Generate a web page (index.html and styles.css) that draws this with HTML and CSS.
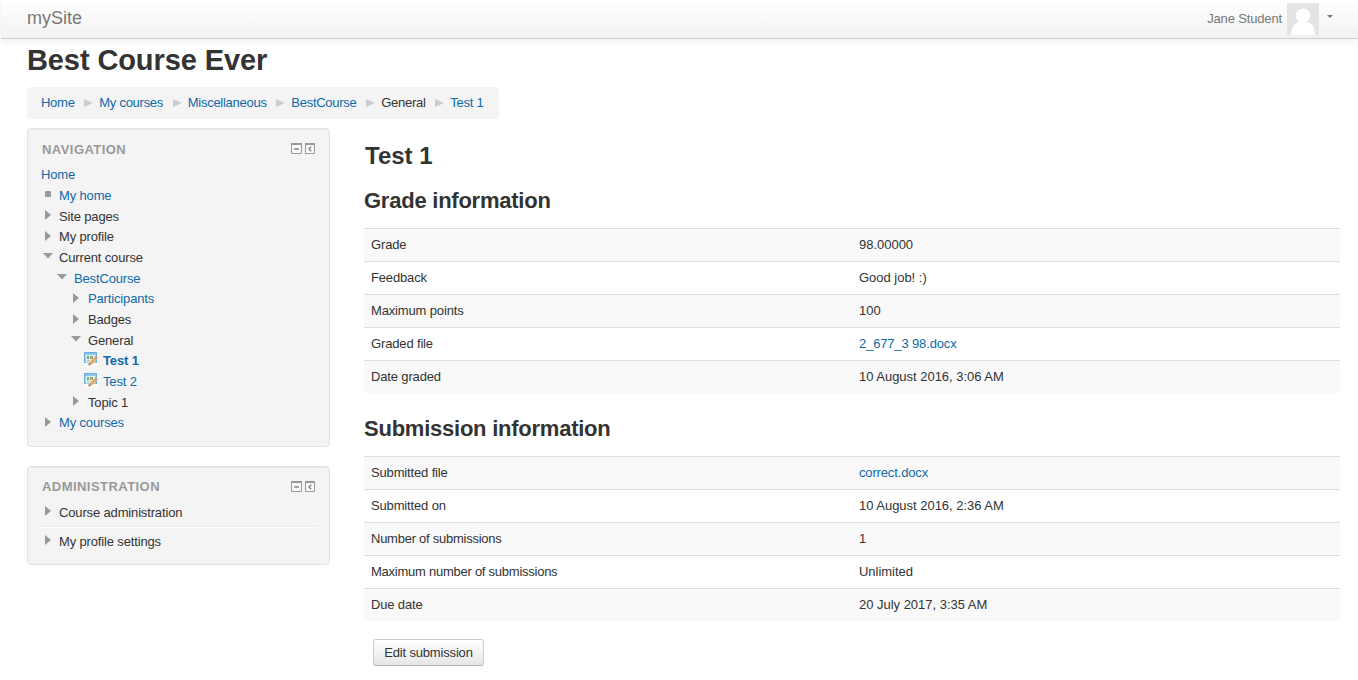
FILE: index.html
```html
<!DOCTYPE html>
<html lang="en">
<head>
<meta charset="utf-8">
<title>Best Course Ever: Test 1</title>
<link rel="stylesheet" href="styles.css">
</head>
<body>
<svg class="defs" width="0" height="0">
  <symbol id="right" viewBox="0 0 6 10"><path d="M0 0L6 5L0 10Z" fill="#999"/></symbol>
  <symbol id="down" viewBox="0 0 10 6"><path d="M0 0H10L5 5.5Z" fill="#999"/></symbol>
  <symbol id="assign" viewBox="0 0 14 15">
    <rect width="14" height="15" fill="#fafafa"/>
    <path d="M0 0H13V11H9L8 12H5L4 11H0Z" fill="#6baed6"/>
    <rect x="1" y="1" width="11" height="2" fill="#8ec5e6"/>
    <rect x="1.5" y="3" width="10" height="7.500" fill="#e6f1f5"/>
    <rect x="3" y="4" width="2" height="3" fill="#7fa65f"/><rect x="6" y="4" width="3" height="3" fill="#86ad86"/>
    <rect x="3" y="8" width="3" height="1" fill="#a9bfa6"/>
    <path d="M4.500 13.500L5.500 10.500L11.500 4.500L13.500 6.500L7.500 12.500Z" fill="#eba55b"/>
    <path d="M10.800 5.200L12 4L14 6L12.800 7.200Z" fill="#d99a9a"/>
    <path d="M4.500 13.500L5.200 11.500L6.500 12.800Z" fill="#77604a"/>
  </symbol>
  <symbol id="block" viewBox="0 0 24 11">
    <path d="M.5.5H10.500V10.500H.5Z M14.500 .5H23.500V10.500H14.500Z" fill="#f8f8f8" stroke="#999"/>
    <path d="M0 1H11M14 1H24" stroke="#999" stroke-width="2"/>
    <path d="M3 6H8" stroke="#888" stroke-width="1.500"/>
    <path d="M20.200 3.800L18 6L20.200 8.200" fill="none" stroke="#888" stroke-width="1.400"/>
  </symbol>
</svg>
<header class="topbar">
  <a class="brand">mySite</a>
  <div class="user">
    <span class="user-name">Jane Student</span>
    <svg class="avatar" viewBox="0 0 32 32"><rect width="32" height="32" fill="#e4e4e4"/><circle cx="16" cy="12.700" r="7.300" fill="#fff"/><path d="M4 32C4 24 9 19 12 19H20C24 19 28 24 28 32Z" fill="#fff"/></svg>
    <span class="caret"></span>
  </div>
</header>
<div class="page">
  <h1>Best Course Ever</h1>
  <nav class="crumbs">
    <a>Home</a><i></i><a>My courses</a><i></i><a>Miscellaneous</a><i></i><a>BestCourse</a><i></i><span>General</span><i></i><a>Test 1</a>
  </nav>
  <div class="columns">
    <aside class="side">
      <section class="block nav">
        <header class="block-head"><h2>NAVIGATION</h2><svg class="block-icons"><use href="#block"/></svg></header>
        <ul class="tree">
          <li class="root"><a>Home</a></li>
          <li class="l1"><b class="bullet"></b><a>My home</a></li>
          <li class="l1"><svg class="right"><use href="#right"/></svg><span>Site pages</span></li>
          <li class="l1"><svg class="right"><use href="#right"/></svg><span>My profile</span></li>
          <li class="l1"><svg class="down"><use href="#down"/></svg><span>Current course</span></li>
          <li class="l2"><svg class="down"><use href="#down"/></svg><a>BestCourse</a></li>
          <li class="l3"><svg class="right"><use href="#right"/></svg><a>Participants</a></li>
          <li class="l3"><svg class="right"><use href="#right"/></svg><span>Badges</span></li>
          <li class="l3"><svg class="down"><use href="#down"/></svg><span>General</span></li>
          <li class="l4"><svg class="assign"><use href="#assign"/></svg><a class="current">Test 1</a></li>
          <li class="l4"><svg class="assign"><use href="#assign"/></svg><a>Test 2</a></li>
          <li class="l3"><svg class="right"><use href="#right"/></svg><span>Topic 1</span></li>
          <li class="l1"><svg class="right"><use href="#right"/></svg><a>My courses</a></li>
        </ul>
      </section>
      <section class="block admin">
        <header class="block-head"><h2>ADMINISTRATION</h2><svg class="block-icons"><use href="#block"/></svg></header>
        <ul class="tree">
          <li class="l1"><svg class="right"><use href="#right"/></svg><span>Course administration</span></li>
          <li class="l1 ruled"><svg class="right"><use href="#right"/></svg><span>My profile settings</span></li>
        </ul>
      </section>
    </aside>
    <main class="main">
      <h2 class="title">Test 1</h2>
      <h3>Grade information</h3>
      <dl class="table">
        <div><dt>Grade</dt><dd>98.00000</dd></div>
        <div><dt>Feedback</dt><dd>Good job! :)</dd></div>
        <div><dt>Maximum points</dt><dd>100</dd></div>
        <div><dt>Graded file</dt><dd><a>2_677_3 98.docx</a></dd></div>
        <div><dt>Date graded</dt><dd>10 August 2016, 3:06 AM</dd></div>
      </dl>
      <h3 class="second">Submission information</h3>
      <dl class="table">
        <div><dt>Submitted file</dt><dd><a>correct.docx</a></dd></div>
        <div><dt>Submitted on</dt><dd>10 August 2016, 2:36 AM</dd></div>
        <div><dt class="tight">Number of submissions</dt><dd>1</dd></div>
        <div><dt class="tight">Maximum number of submissions</dt><dd>Unlimited</dd></div>
        <div><dt>Due date</dt><dd>20 July 2017, 3:35 AM</dd></div>
      </dl>
      <button class="button">Edit submission</button>
    </main>
  </div>
</div>
</body>
</html>
```
FILE: styles.css
```css
* { box-sizing: border-box; }
body { margin: 0; background: #fff; color: #333; font: 13px/20px "Liberation Sans", Arial, sans-serif; letter-spacing: -.15px; overflow: hidden; }
h1, h2, h3, ul, dl, dd { margin: 0; padding: 0; }
a { color: #0f6aa8; text-decoration: none; }
.defs { display: block; }
.topbar { height: 39px; margin-left: 1px; padding: 0 25px 0 26px; display: flex; justify-content: space-between; background: linear-gradient(#fff, #f2f2f2); border-bottom: 1px solid #d0d0d0; box-shadow: 0 1px 8px rgba(0,0,0,.09); }
.brand { color: #777; font-size: 18px; line-height: 36px; letter-spacing: 0; }
.user { display: flex; align-items: flex-start; color: #777; }
.user-name { line-height: 37px; margin-right: 5px; }
.avatar { width: 32px; height: 32px; margin-top: 3px; }
.caret { margin: 15px 0 0 8px; border: 3px solid transparent; border-top-color: #777; border-bottom: 0; }
.page { padding: 0 18px 0 27px; }
h1 { font-size: 29px; line-height: 42px; height: 48px; letter-spacing: -.1px; }
.crumbs { display: flex; align-items: center; width: 472px; height: 32px; padding: 0 14px; background: #f4f4f4; border-radius: 4px; white-space: nowrap; }
.crumbs > * { flex: none; }
.crumbs i { width: 0; margin: 0 6px 0 9.700px; border: solid transparent; border-width: 4.5px 0 4.5px 9px; border-left-color: #ccc; }
.crumbs a, .crumbs span { letter-spacing: -.27px; }
.columns { display: grid; grid-template-columns: 303px 976px; gap: 34px; margin-top: 9px; }
.block { padding: 10px 13px 0; background: #f4f4f4; border: 1px solid #e2e2e2; border-radius: 4px; box-shadow: inset 0 1px 1px rgba(0,0,0,.04); }
.nav { height: 319px; }
.admin { height: 99px; margin-top: 19px; padding-top: 9px; }
.block-head { display: flex; justify-content: space-between; align-items: flex-start; height: 20px; padding: 0 1px; }
.block-head h2 { color: #999; font-size: 13px; line-height: 21px; letter-spacing: .45px; }
.block-icons { width: 24px; height: 11px; margin-top: 4px; }
.admin .block-icons { margin-top: 5px; }
.tree { list-style: none; margin-top: 5px; }
.tree li { height: 20.68px; line-height: 21px; display: flex; align-items: flex-start; }
.nav .tree { padding-top: .3px; }
.tree svg { flex: none; }
.l1 { padding-left: 4px; }
.l2 { padding-left: 19px; }
.l3 { padding-left: 33px; }
.l4 { padding-left: 43px; }
.right { width: 6px; height: 10px; margin: 4.700px 8px 0 0; }
.down { width: 10px; height: 6px; margin: 6.500px 6px 0 -2px; }
.l2 .down, .l3 .down { margin-right: 7px; margin-left: -3px; }
.l3 .right { margin-right: 9px; margin-left: -1px; }
.bullet { width: 6px; height: 6px; margin: 6px 8px 0 0; background: #999; border-radius: 1px; }
.assign { width: 14px; height: 15px; margin: 1.500px 5px 0 0; }
.current { font-weight: 700; }
.admin .tree { margin-top: 6px; }
.admin .right { margin-top: 4px; }
.admin .ruled { height: 30px; margin-top: 3.500px; padding-top: 4px; border-top: 1px solid #eaeaea; box-shadow: inset 0 1px #fff; }
.admin .ruled .right { margin-top: 3.500px; }
.title { font-size: 24px; line-height: 38px; height: 40px; margin-top: 9px; padding-left: 1px; letter-spacing: 0; }
h3 { font-size: 22px; line-height: 42px; margin-top: 3px; height: 48px; letter-spacing: -.24px; }
h3.second { margin-top: 15px; }
.table > div { display: grid; grid-template-columns: 1fr 1fr; height: 33px; border-top: 1px solid #ddd; line-height: 31px; }
.table > div:nth-child(odd) { background: #f9f9f9; }
.table dt, .table dd { padding-left: 7px; }
.table dd { letter-spacing: -.02px; }
.table dd a { letter-spacing: -.15px; }
.table .tight { letter-spacing: -.25px; }
.button { display: block; width: 111px; height: 27px; margin: 18px 0 0 9px; padding: 0; color: #333; font: inherit; letter-spacing: -.17px; line-height: 20px; background: linear-gradient(#fff, #e6e6e6); border: 1px solid #ccc; border-bottom-color: #b3b3b3; border-radius: 3px; }
```
